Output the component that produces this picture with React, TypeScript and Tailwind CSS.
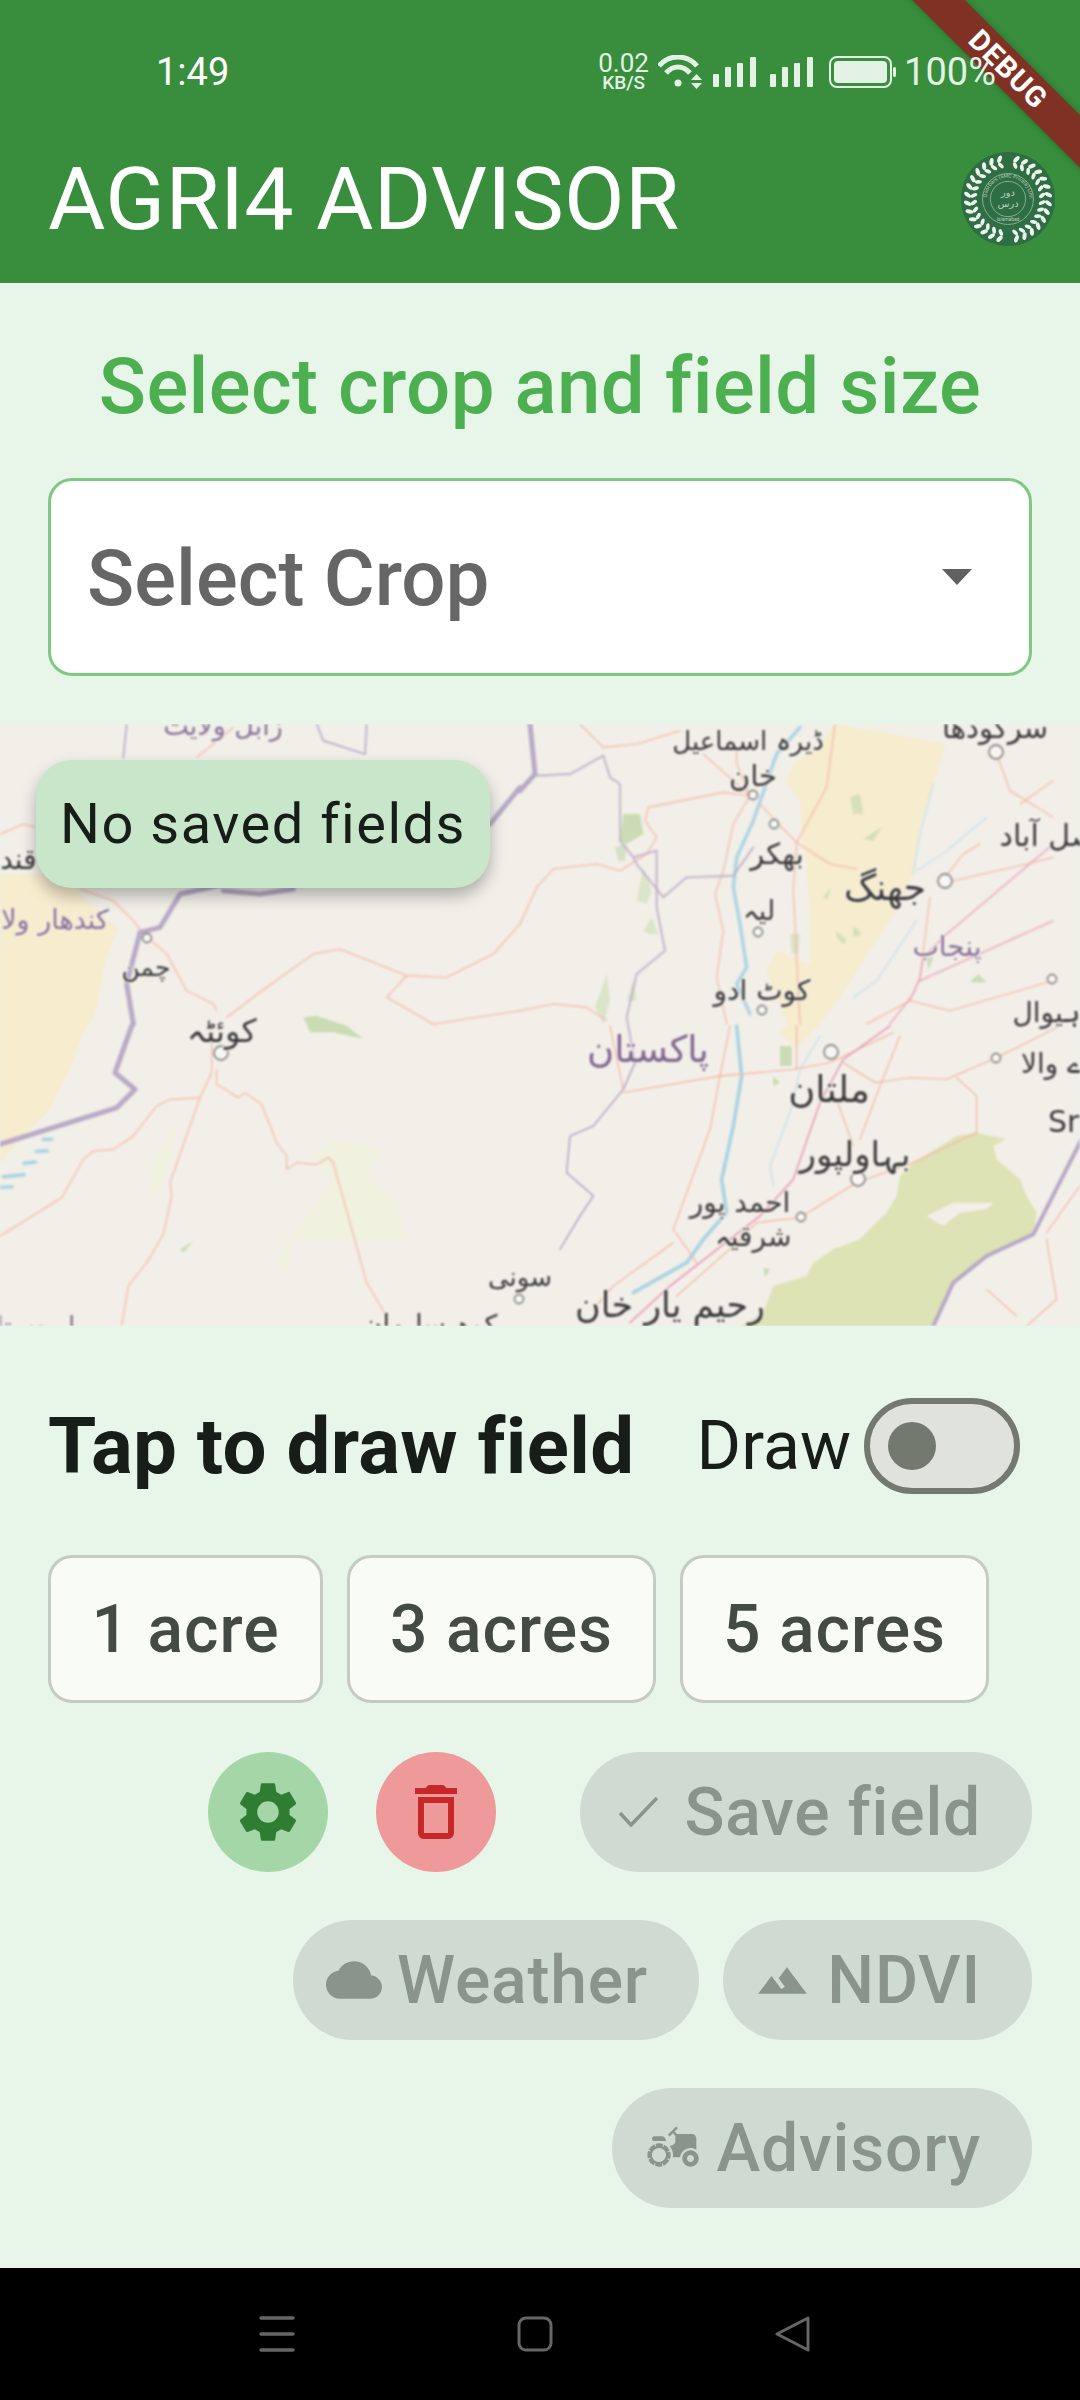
import React from 'react';
import { MdSettings, MdDeleteOutline, MdCloud, MdTerrain, MdAgriculture } from 'react-icons/md';

// roads, rivers etc. are traced per map quadrant, in 3x coordinates
const Line = ({ p, c, w }: { p: string; c: string; w: number }) => (
  <polyline points={p} fill="none" stroke={c} strokeWidth={w} strokeLinejoin="round" strokeLinecap="round" />
);

const ROAD = '#f4b9a6';
const PINK = '#ea9db5';
const BORDER = '#b9a9c6';
const RIVER = '#aad3e2';
const RIVER_LIGHT = '#cfe3e6';
const PATCH = '#cbdcb4';

const Label = ({ x, y, s, t, c = '#3a3a3a' }: { x: number; y: number; s: number; t: string; c?: string }) => (
  <text x={x} y={y} fontSize={s} fill={c} textAnchor="middle" stroke="#f2efe9" strokeWidth={2} paintOrder="stroke">
    {t}
  </text>
);

const Dot = ({ x, y, r }: { x: number; y: number; r: number }) => (
  <circle cx={x} cy={y} r={r} fill="#f7f6f2" stroke="#8d8d88" strokeWidth={1.8} />
);

const MapBackground = () => (
  <svg viewBox="0 0 1080 602" className="block w-full h-full blur-[0.8px] font-['DejaVu_Sans']">
    <rect width="1080" height="602" fill="#f2efe9" />
    <polygon
      points="0,150 70,150 80,170 118,205 105,240 95,290 83,310 70,345 50,385 20,415 0,440"
      fill="#f6ecce"
    />
    <g transform="translate(520 0) scale(0.3333)">
      <polygon
        points="950,0 1275,60 1240,180 1200,300 1180,450 1130,560 1050,680 960,820 900,900 830,970 780,930 800,900 740,740 770,680 870,720 870,600 860,420 845,350 840,230 800,170 820,120 900,60"
        fill="#f6ecce"
      />
      <g className="blur-[1.5px]">
        <polygon points="300,350 310,270 360,270 370,330 320,360" fill={PATCH} />
        <polygon points="285,370 320,360 315,410 295,410" fill={PATCH} opacity=".7" />
        <polygon points="350,530 370,430 395,500 380,540" fill={PATCH} opacity=".6" />
        <polygon points="370,620 395,580 415,630 385,630" fill={PATCH} opacity=".6" />
        <polygon points="990,220 1020,210 1030,270 1000,270" fill={PATCH} opacity=".7" />
        <polygon points="1030,345 1085,310 1060,350" fill={PATCH} opacity=".8" />
        <polygon points="950,620 980,650 970,660 950,640" fill={PATCH} opacity=".8" />
        <polygon points="1000,605 1025,630 1000,640" fill={PATCH} opacity=".8" />
        <polygon points="810,630 840,630 835,690 815,690" fill={PATCH} opacity=".6" />
        <polygon points="225,850 260,750 270,830 250,900" fill={PATCH} opacity=".6" />
        <polygon points="320,830 340,770 350,830" fill={PATCH} opacity=".6" />
        <polygon points="1350,775 1400,775 1375,750" fill={PATCH} />
        <polygon points="1220,700 1240,700 1225,740" fill={PATCH} />
        <polygon points="910,520 935,490 920,525" fill={PATCH} />
      </g>
      <Line p="1240,180 1200,330 1180,450" c={RIVER_LIGHT} w={5} />
      <Line p="1190,590 1070,770 1000,820" c={RIVER_LIGHT} w={5} />
      <Line p="1400,280 1280,380 1190,440" c={RIVER_LIGHT} w={5} />
      <Line p="840,10 770,90 700,290 650,400 640,490 660,600 680,730 650,780 690,870" c={RIVER} w={10} />
      <Line p="180,0 250,70 350,60 480,20" c={ROAD} w={4} />
      <Line p="0,600 50,490 100,435 230,420 300,440 380,390 410,340 375,290 385,250 610,205 690,215" c={ROAD} w={4} />
      <Line p="690,215 640,300 610,440 585,510 610,620 590,760 620,900" c={ROAD} w={4} />
      <Line p="720,240 775,300 830,355 930,420 1010,435" c={ROAD} w={4} />
      <Line p="830,355 920,190 945,0" c={ROAD} w={4} />
      <Line p="830,355 820,500 840,900" c={ROAD} w={4} />
      <Line p="0,860 100,840 200,850 260,890" c={ROAD} w={4} />
      <Line p="690,215 650,120 650,70" c={ROAD} w={4} />
      <Line p="690,215 550,90" c={ROAD} w={4} />
      <Line p="1300,470 1520,420 1600,400" c={ROAD} w={4} />
      <Line p="1260,480 1330,390 1380,360" c={ROAD} w={4} />
      <Line p="1430,90 1470,200 1600,280" c={ROAD} w={4} />
      <Line p="1600,170 1500,240" c={ROAD} w={4} />
      <Line p="1230,520 1200,760 1170,830 1290,860" c={ROAD} w={4} />
      <Line p="1290,860 1600,770" c={ROAD} w={4} />
      <Line p="1170,830 1040,900" c={ROAD} w={4} />
      <Line p="1600,360 1280,630 1210,700 1200,760 1180,810 1110,900" c={PINK} w={4} />
      <Line p="1200,770 1600,590" c={PINK} w={4} />
      <Line p="50,155 150,150 250,95 270,160 300,180 300,350 340,400 410,380 410,550 435,680 350,750 320,880 345,1020" c={BORDER} w={5} />
      <Line p="340,400 350,420 430,520 500,460 640,455 700,370" c={BORDER} w={5} />
      <Line p="30,0 45,150 0,200" c={BORDER} w={15} />
    </g>
    <g transform="translate(0 0) scale(0.3333)">
      <Line p="0,330 70,300 105,310" c={ROAD} w={4} />
      <Line p="240,495 340,530 400,590 430,630 500,690 560,800 640,840 650,860" c={ROAD} w={4} />
      <Line p="680,880 800,790 940,690 1020,675 1220,755 1340,760 1480,690 1560,600" c={ROAD} w={4} />
      <Line p="1220,755 1160,820 1300,900 1560,860" c={ROAD} w={4} />
      <Line p="590,100 640,60 700,10" c={ROAD} w={4} />
      <polygon points="910,880 950,875 1040,905 1090,945 1000,925 930,925" fill={PATCH} className="blur-[1.5px]" />
      <Line p="380,0 370,100" c={BORDER} w={5} />
      <Line p="1100,0 1095,90 970,50 950,0" c={BORDER} w={5} />
      <Line p="1560,190 1470,300 540,510 480,610 420,625 380,780 400,900" c={BORDER} w={15} />
      <Line p="670,500 780,510 880,495" c={BORDER} w={15} />
    </g>
    <g transform="translate(0 302) scale(0.3333)">
      <g className="blur-[2px]">
        <polygon points="1000,340 1150,370 1100,450 1190,520 1220,640 880,640 860,740 830,700 880,620 1000,460 930,390" fill="#f0f1df" />
        <polygon points="460,400 530,290 500,450 450,550" fill="#f0f1df" />
      </g>
      <polygon points="540,670 580,645 550,680" fill={PATCH} />
      <Line p="395,0 345,140 405,190 350,245 0,355" c={BORDER} w={15} />
      <Line p="130,340 155,340" c={RIVER} w={11} />
      <Line p="108,376 142,374" c={RIVER} w={11} />
      <Line p="72,412 106,408" c={RIVER} w={11} />
      <Line p="10,452 72,446" c={RIVER} w={11} />
      <Line p="0,484 36,482" c={RIVER} w={11} />
      <Line p="635,50 635,140 600,215 510,220 470,240 400,330 340,370 280,375 250,400 185,515 0,630" c={ROAD} w={4} />
      <Line p="600,215 510,470 515,510 490,625 440,710 385,780 365,900" c={ROAD} w={4} />
      <Line p="650,130 650,175 715,215 735,200 785,235 830,350 860,390 860,430 890,410 950,415 985,395 1000,410 1100,770 1165,880" c={ROAD} w={4} />
    </g>
    <g transform="translate(560 302) scale(0.3333)">
      <polygon
        points="1340,340 1250,320 1190,330 1060,410 1020,450 1010,510 980,560 900,640 820,670 760,710 740,750 640,780 610,860 540,900 1120,900 1180,770 1280,690 1420,625 1430,560 1400,510 1380,460 1310,400 1300,360"
        fill="#dde3b4"
      />
      <polygon points="1100,570 1180,530 1300,530 1280,550 1200,560 1150,600" fill="#f2efe9" />
      <g className="blur-[1.5px]">
        <polygon points="660,60 695,60 695,120 660,120" fill={PATCH} />
        <polygon points="640,150 660,170 640,180" fill={PATCH} />
        <polygon points="610,725 630,730 615,755" fill={PATCH} />
      </g>
      <Line p="780,30 720,130 690,260 630,420 640,480" c={RIVER_LIGHT} w={5} />
      <Line p="530,0 545,150 520,300 485,460 500,560 430,640 380,710 220,800" c={RIVER} w={11} />
      <Line p="190,200 480,150 700,130 810,110 1000,20" c={ROAD} w={4} />
      <Line p="190,190 160,50 150,0" c={ROAD} w={4} />
      <Line p="480,150 510,0" c={ROAD} w={4} />
      <Line p="480,150 450,310 340,610 410,710" c={ROAD} w={4} />
      <Line p="340,650 160,780 100,850" c={ROAD} w={4} />
      <Line p="710,130 710,0" c={ROAD} w={4} />
      <Line p="850,110 945,170 1050,155 1160,160 1310,95 1500,0" c={ROAD} w={4} />
      <Line p="1190,155 1250,210 1250,320 1060,410 890,470 720,575 590,590 520,660 350,810" c={ROAD} w={4} />
      <Line p="830,220 880,360" c={ROAD} w={4} />
      <Line p="1020,30 960,180 900,340" c={ROAD} w={4} />
      <Line p="1460,640 1490,820 1400,900" c={ROAD} w={4} />
      <Line p="1280,790 1370,870" c={ROAD} w={4} />
      <Line p="1560,480 1460,620" c={ROAD} w={4} />
      <Line p="990,0 850,100 780,230 700,460 600,570 330,780 210,890" c={PINK} w={5} />
      <Line p="225,110 190,190 100,300 30,330 20,440 100,510 60,570 0,670" c={BORDER} w={5} />
      <Line p="1570,330 1420,625 1280,690 1180,770 1120,900" c={BORDER} w={12} />
    </g>

    <Dot x={147} y={214} r={4.5} />
    <Dot x={221} y={329} r={7} />
    <Dot x={753} y={71} r={4.5} />
    <Dot x={774} y={100} r={4.5} />
    <Dot x={758} y={208} r={4.5} />
    <Dot x={762} y={286} r={4.5} />
    <Dot x={945} y={157} r={7} />
    <Dot x={996} y={28} r={7} />
    <Dot x={1052} y={255} r={4.5} />
    <Dot x={831} y={328} r={7} />
    <Dot x={996} y={334} r={4.5} />
    <Dot x={858} y={455} r={7} />
    <Dot x={801} y={493} r={4.5} />
    <Dot x={519} y={575} r={4.5} />

    <Label x={223} y={11} s={27} t="زابل ولایت" c="#8a7398" />
    <Label x={0} y={145} s={28} t="قندهار" />
    <Label x={38} y={205} s={27} t="کندهار ولایت" c="#8a7398" />
    <Label x={146} y={252} s={25} t="چمن" />
    <Label x={222} y={318} s={32} t="کوئٹہ" />
    <Label x={748} y={26} s={26} t="ڈیرہ اسماعیل" />
    <Label x={753} y={62} s={29} t="خان" />
    <Label x={777} y={140} s={29} t="بھکر" />
    <Label x={759} y={196} s={27} t="لیہ" />
    <Label x={762} y={276} s={28} t="کوٹ ادو" />
    <Label x={885} y={176} s={36} t="جھنگ" />
    <Label x={995} y={14} s={29} t="سرگودھا" />
    <Label x={1060} y={122} s={30} t="فیصل آباد" />
    <Label x={947} y={232} s={28} t="پنجاب" c="#8a7398" />
    <Label x={1062} y={298} s={28} t="ساہیوال" />
    <Label x={1070} y={349} s={28} t="بورے والا" />
    <Label x={648} y={338} s={37} t="پاکستان" c="#7f6590" />
    <Label x={829} y={378} s={37} t="ملتان" />
    <Label x={855} y={442} s={34} t="بہاولپور" />
    <Label x={740} y={488} s={28} t="احمد پور" />
    <Label x={753} y={522} s={28} t="شرقیہ" />
    <Label x={670} y={593} s={35} t="رحیم یار خان" />
    <Label x={520} y={562} s={26} t="سونی" />
    <Label x={30} y={612} s={27} t="بلوچستان" c="#8a7398" />
    <Label x={430} y={610} s={27} t="کوہ سلیمان" />
    <text x={1048} y={408} fontSize={30} fill="#3a3a3a">Sr</text>
  </svg>
);

const Logo = () => {
  const leaves = Array.from({ length: 30 }, (_, i) => i).filter((i) => i !== 0 && i !== 15);
  return (
    <svg width="96" height="94" viewBox="0 0 96 96">
      <circle cx="48" cy="48" r="48" fill="#2f6d45" />
      {leaves.map((i) => {
        const a = (i / 30) * 360;
        return (
          <g key={i} transform={`rotate(${a} 48 48)`}>
            <ellipse cx="48" cy="6.5" rx="2.1" ry="4" fill="#eef5ee" transform="rotate(32 48 6.5)" />
            <ellipse cx="48" cy="13" rx="1.9" ry="3.6" fill="#eef5ee" transform="rotate(-32 48 13)" />
          </g>
        );
      })}
      <circle cx="48" cy="48" r="26" fill="none" stroke="#9cc0a6" strokeWidth="0.8" />
      <circle cx="48" cy="48" r="18" fill="none" stroke="#9cc0a6" strokeWidth="0.8" />
      <defs>
        <path id="seal-top" d="M26 48a22 22 0 1 1 44 0" />
      </defs>
      <text fontSize="5.2" fill="#b7d2bd" fontFamily="Roboto">
        <textPath href="#seal-top" startOffset="2">DoorDars (SMC Private) Limited</textPath>
      </text>
      <text x="48" y="45" fontSize="10" fill="#b7d2bd" textAnchor="middle" fontFamily="DejaVu Sans">دور</text>
      <text x="48" y="56" fontSize="10" fill="#b7d2bd" textAnchor="middle" fontFamily="DejaVu Sans">درس</text>
      <text x="48" y="70" fontSize="5" fill="#b7d2bd" textAnchor="middle" fontFamily="Roboto">Islamabad</text>
    </svg>
  );
};

const Bars = () => (
  <svg width="43" height="30" viewBox="0 0 43 30" fill="#e3f2e4">
    <rect x="0" y="17" width="6" height="13" rx="1" />
    <rect x="12" y="10" width="6" height="20" rx="1" />
    <rect x="24" y="6" width="6" height="24" rx="1" />
    <rect x="37" y="0" width="6" height="30" rx="1" />
  </svg>
);

const StatusBar = () => (
  <div className="h-[114px] pt-[30px] flex items-center pl-[156px] pr-[84px] text-[#e3f2e4]">
    <span className="text-[38px] leading-none text-white">1:49</span>
    <div className="ml-auto flex items-center">
      <div className="flex flex-col items-center w-[51px]">
        <span className="text-[26px] leading-[21px]">0.02</span>
        <span className="text-[19px] leading-[17px] font-medium">KB/S</span>
      </div>
      <svg width="44" height="34" viewBox="0 0 44 34" className="ml-[9px]" fill="none" stroke="#e3f2e4">
        <path d="M1 11C11 -1 29 -1 39 11" strokeWidth="5" />
        <path d="M8 18C15 10 25 10 32 18" strokeWidth="5" />
        <circle cx="20" cy="28" r="3.5" fill="#e3f2e4" stroke="none" />
        <path d="M33 25h11l-5.500-6zM33 28h11l-5.500 6z" fill="#e3f2e4" stroke="none" />
      </svg>
      <div className="ml-[11px]"><Bars /></div>
      <div className="ml-[14px]"><Bars /></div>
      <svg width="67" height="32" viewBox="0 0 67 32" className="ml-[16px]">
        <rect x="1" y="1" width="61" height="30" rx="7" fill="none" stroke="#e3f2e4" strokeWidth="2" />
        <rect x="5" y="5" width="53" height="22" rx="4" fill="#e3f2e4" />
        <rect x="64" y="11" width="3" height="10" rx="1.500" fill="#e3f2e4" />
      </svg>
      <span className="relative z-10 ml-[8px] text-[38px] leading-none">100%</span>
    </div>
  </div>
);

const PillButton = ({ icon, label, className }: { icon: React.ReactNode; label: string; className: string }) => (
  <div className={`h-[120px] rounded-full bg-[#cfdad0] flex items-center justify-end pr-[51px] text-[#8a948a] text-[66px] tracking-[0.8px] font-medium ${className}`}>
    {icon}
    <span>{label}</span>
  </div>
);

const SizeChip = ({ label, className }: { label: string; className: string }) => (
  <div className={`h-[148px] flex items-center justify-center rounded-[24px] border-[3px] border-[#c4cbc0] bg-[#f8fcf4] text-[#444b44] text-[66px] tracking-[1px] font-medium ${className}`}>
    {label}
  </div>
);

export default function App() {
  return (
    <div className="relative w-[1080px] h-[2400px] overflow-hidden flex flex-col bg-[#e8f5e9] font-['Roboto',sans-serif]">
      <header className="h-[283px] shrink-0 bg-[#388e3c]">
        <StatusBar />
        <div className="h-[169px] flex items-center justify-between pl-[48px] pr-[24px]">
          <h1 className="text-[88px] leading-none tracking-[0.3px] text-white">AGRI4 ADVISOR</h1>
          <Logo />
        </div>
      </header>

      <main className="flex-1 flex flex-col">
        <h2 className="mt-[62px] text-center text-[78px] leading-[84px] tracking-[0.35px] font-medium text-[#4caf50]">
          Select crop and field size
        </h2>

        <div className="mx-[48px] mt-[49px] h-[198px] rounded-[24px] border-[3px] border-[#81c784] bg-white flex items-center justify-between pl-[36px] pr-[57px]">
          <span className="pt-[3px] text-[78px] font-medium text-[#666666]">Select Crop</span>
          <svg width="30" height="16" viewBox="0 0 30 16"><polygon points="0,0 30,0 15,16" fill="#616161" /></svg>
        </div>

        <section className="relative mt-[48px] h-[602px] overflow-hidden">
          <MapBackground />
          <div className="absolute left-[36px] top-[36px] w-[454px] h-[128px] flex items-center justify-center rounded-[36px] bg-[#c8e6c9] text-[56px] tracking-[1.5px] text-[#171d17] shadow-[0_8px_16px_rgba(0,0,0,0.28)]">
            No saved fields
          </div>
        </section>

        <div className="mt-[72px] pl-[48px] pr-[60px] h-[96px] flex items-center justify-between">
          <span className="text-[78px] tracking-[0.3px] font-bold text-[#171d17]">Tap to draw field</span>
          <div className="flex items-center">
            <span className="text-[68px] text-[#171d17]">Draw</span>
            <div className="ml-[13px] w-[156px] h-[96px] rounded-full border-[6px] border-[#74796f] bg-[#e0e3db] flex items-center pl-[18px]">
              <div className="w-[48px] h-[48px] rounded-full bg-[#74796f]" />
            </div>
          </div>
        </div>

        <div className="mt-[61px] pl-[48px] flex gap-[24px]">
          <SizeChip label="1 acre" className="w-[275px]" />
          <SizeChip label="3 acres" className="w-[309px]" />
          <SizeChip label="5 acres" className="w-[309px]" />
        </div>

        <div className="mt-[49px] pr-[48px] flex flex-col gap-[48px]">
          <div className="flex justify-end items-center">
            <div className="w-[120px] h-[120px] rounded-full bg-[#a5d6a7] flex items-center justify-center text-[#2e7d32]">
              <MdSettings size={72} />
            </div>
            <div className="ml-[48px] mr-[84px] w-[120px] h-[120px] rounded-full bg-[#ef9a9a] flex items-center justify-center text-[#c62828]">
              <MdDeleteOutline size={72} />
            </div>
            <PillButton
              className="w-[452px]"
              label="Save field"
              icon={
                <svg width="39" height="30" viewBox="0 0 39 30" fill="none" stroke="#8a948a" strokeWidth="3.500" className="mr-[26px]">
                  <polyline points="1,16 12,28 38,1" />
                </svg>
              }
            />
          </div>
          <div className="flex justify-end gap-[24px]">
            <PillButton className="w-[406px]" label="Weather" icon={<MdCloud size={56} className="mr-[15px]" />} />
            <PillButton className="w-[309px]" label="NDVI" icon={<MdTerrain size={53} className="mr-[18px]" />} />
          </div>
          <div className="flex justify-end">
            <PillButton className="w-[420px]" label="Advisory" icon={<MdAgriculture size={56} className="mr-[15px]" />} />
          </div>
        </div>
      </main>

      <nav className="h-[132px] shrink-0 bg-black flex items-start pt-[48px] pl-[259px]">
        <svg width="36" height="36" viewBox="0 0 36 36" stroke="#666666" strokeWidth="3.500" strokeLinecap="round">
          <path d="M2 2h32M2 18h32M2 34h32" />
        </svg>
        <svg width="36" height="36" viewBox="0 0 36 36" fill="none" stroke="#666666" strokeWidth="3" className="ml-[222px]">
          <rect x="2" y="2" width="32" height="32" rx="7" />
        </svg>
        <svg width="36" height="36" viewBox="0 0 36 36" fill="none" stroke="#666666" strokeWidth="3" strokeLinejoin="round" className="ml-[222px]">
          <path d="M33 2 L2 18 L33 34 Z" />
        </svg>
      </nav>

      <div className="absolute left-[808px] top-[51px] w-[400px] h-[37px] rotate-45 bg-[#7f3224] shadow-[0_0_6px_rgba(0,0,0,0.25)] flex items-center justify-center text-white text-[29px] font-bold tracking-[1px]">
        DEBUG
      </div>
    </div>
  );
}
